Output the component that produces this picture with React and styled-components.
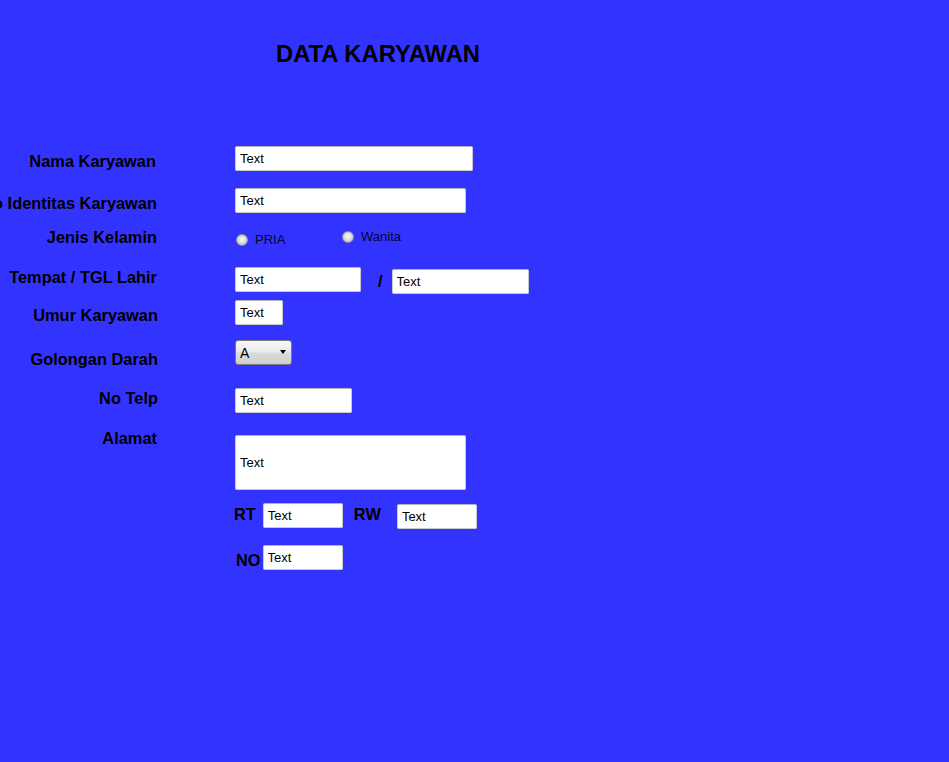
import React from "react";
import styled, { createGlobalStyle } from "styled-components";

const Global = createGlobalStyle`
  html, body {
    margin: 0;
    padding: 0;
    background: #3333ff;
    min-height: 100%;
  }
  body {
    font-family: "Liberation Sans", Arial, sans-serif;
    color: #000;
    overflow: hidden;
  }
`;

const Page = styled.div`
  min-height: 762px;
  background: #3333ff;
  padding-top: 40px;
  box-sizing: border-box;
`;

const Title = styled.h1`
  margin: 0 0 0 276px;
  font-size: 23.8px;
  line-height: 28px;
  font-weight: bold;
  white-space: nowrap;
`;

const Form = styled.form`
  margin-top: 78px;
  display: flex;
  flex-direction: column;
`;

const Row = styled.div`
  display: grid;
  grid-template-columns: 158px 1fr;
  column-gap: 77px;
  height: ${(p) => p.$h}px;
  align-items: start;
`;

const Label = styled.div`
  display: flex;
  justify-content: flex-end;
  white-space: nowrap;
  font-size: 16.4px;
  line-height: 18px;
  font-weight: bold;
  margin-top: ${(p) => p.$top || 0}px;
  margin-right: ${(p) => p.$right || 0}px;
`;

const Field = styled.div`
  display: flex;
  align-items: flex-start;
  margin-top: ${(p) => p.$top || 0}px;
`;

const TextInput = styled.input`
  box-sizing: border-box;
  width: ${(p) => p.$w}px;
  height: ${(p) => p.$h || 25}px;
  margin: ${(p) => p.$top || 0}px 0 0 ${(p) => p.$left || 0}px;
  padding: 0 4px;
  border: 1px solid #c9c9cf;
  border-top-color: #b4b4bc;
  border-radius: 2px;
  background: #fff;
  font-family: "Liberation Sans", Arial, sans-serif;
  font-size: 13px;
  color: #000;
  outline: none;
`;

const InlineLabel = styled.span`
  font-size: 16.4px;
  line-height: 18px;
  font-weight: bold;
  white-space: nowrap;
  margin: ${(p) => p.$top || 0}px 0 0 ${(p) => p.$left || 0}px;
`;

const RadioOption = styled.label`
  display: flex;
  align-items: center;
  width: ${(p) => p.$w || "auto"};
  height: 15px;
  margin: ${(p) => p.$top || 0}px 0 0 ${(p) => p.$left || 0}px;
  font-size: 13px;
  line-height: 15px;
  color: #05052a;
  white-space: nowrap;
`;

const Radio = styled.input.attrs({ type: "radio" })`
  appearance: none;
  -webkit-appearance: none;
  box-sizing: border-box;
  width: 12px;
  height: 12px;
  margin: 0 ${(p) => p.$gap}px 0 0;
  border-radius: 50%;
  border: 1px solid #8e8e9c;
  background: radial-gradient(circle at 50% 45%, #f8f8f8 0%, #e2e2e4 40%, #b8b8be 100%);
  flex: none;
`;

const SelectWrap = styled.div`
  position: relative;
  width: 57px;
  height: 25px;
  &::after {
    content: "";
    position: absolute;
    right: 6px;
    top: 10px;
    border-left: 3.5px solid transparent;
    border-right: 3.5px solid transparent;
    border-top: 4px solid #000;
    pointer-events: none;
  }
`;

const Select = styled.select`
  appearance: none;
  -webkit-appearance: none;
  box-sizing: border-box;
  width: 100%;
  height: 100%;
  padding: 0 0 0 4px;
  border: 1px solid #7a7a7a;
  border-radius: 3px;
  background: linear-gradient(#f6f6f6 0%, #ececec 45%, #dadada 55%, #cfcfcf 100%);
  font-family: "Liberation Sans", Arial, sans-serif;
  font-size: 14px;
  color: #000;
  outline: none;
`;

export default function App() {
  return (
    <>
      <Global />
      <Page>
        <Title>DATA KARYAWAN</Title>
        <Form onSubmit={(e) => e.preventDefault()}>
          <Row $h={42}>
            <Label $top={6} $right={2}>Nama Karyawan</Label>
            <Field>
              <TextInput $w={238} defaultValue="Text" />
            </Field>
          </Row>
          <Row $h={40}>
            <Label $top={6} $right={1}>No Identitas Karyawan</Label>
            <Field>
              <TextInput $w={231} defaultValue="Text" />
            </Field>
          </Row>
          <Row $h={39}>
            <Label $top={0} $right={1}>Jenis Kelamin</Label>
            <Field>
              <RadioOption $w="106px" $top={4} $left={1}>
                <Radio name="jk" $gap={7} />
                PRIA
              </RadioOption>
              <RadioOption $top={1}>
                <Radio name="jk" $gap={7} />
                Wanita
              </RadioOption>
            </Field>
          </Row>
          <Row $h={33}>
            <Label $top={1} $right={1}>Tempat / TGL Lahir</Label>
            <Field>
              <TextInput $w={126} defaultValue="Text" />
              <InlineLabel $top={5} $left={17}>/</InlineLabel>
              <TextInput $w={137} $top={2} $left={9} defaultValue="Text" />
            </Field>
          </Row>
          <Row $h={40}>
            <Label $top={6}>Umur Karyawan</Label>
            <Field>
              <TextInput $w={48} defaultValue="Text" />
            </Field>
          </Row>
          <Row $h={48}>
            <Label $top={10}>Golongan Darah</Label>
            <Field>
              <SelectWrap>
                <Select defaultValue="A">
                  <option value="A">A</option>
                  <option value="B">B</option>
                  <option value="AB">AB</option>
                  <option value="O">O</option>
                </Select>
              </SelectWrap>
            </Field>
          </Row>
          <Row $h={41}>
            <Label $top={1}>No Telp</Label>
            <Field>
              <TextInput $w={117} defaultValue="Text" />
            </Field>
          </Row>
          <Row $h={74}>
            <Label $top={0} $right={1}>Alamat</Label>
            <Field $top={6}>
              <TextInput $w={231} $h={55} defaultValue="Text" />
            </Field>
          </Row>
          <Row $h={42}>
            <span />
            <Field>
              <InlineLabel $top={2} $left={-1}>RT</InlineLabel>
              <TextInput $w={80} $left={7} defaultValue="Text" />
              <InlineLabel $top={2} $left={11}>RW</InlineLabel>
              <TextInput $w={80} $top={1} $left={16} defaultValue="Text" />
            </Field>
          </Row>
          <Row $h={40}>
            <span />
            <Field>
              <InlineLabel $top={6} $left={1}>NO</InlineLabel>
              <TextInput $w={80} $left={2} defaultValue="Text" />
            </Field>
          </Row>
        </Form>
      </Page>
    </>
  );
}
